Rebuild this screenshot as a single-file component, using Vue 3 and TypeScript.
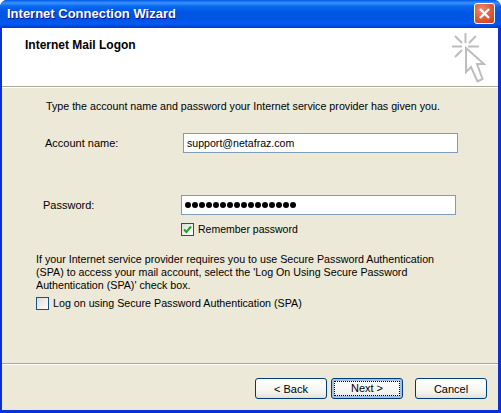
<template>
  <div class="window">
    <div class="titlebar">
      <span class="title">Internet Connection Wizard</span>
      <button class="close" type="button" aria-label="Close">
        <svg width="13" height="13" viewBox="0 0 13 13">
          <path d="M2 2 L11 11 M11 2 L2 11" stroke="#fff" stroke-width="2.4" />
        </svg>
      </button>
    </div>
    <div class="client">
      <div class="header">
        <h1 class="heading">Internet Mail Logon</h1>
        <svg class="wizard-icon" width="34" height="50" viewBox="0 0 34 50">
          <path d="M0 13.5H10M13.5 0V10M16 13.5H27M3 3L10 10M24 3L17 10M3 24L10 17" fill="none" stroke="#bdbdbd" stroke-width="2" />
          <path d="M14 15V39L19 34L25.5 48.5L30.5 46L25 31H32Z" fill="#fff" stroke="#bdbdbd" stroke-width="2" />
        </svg>
      </div>
      <div class="body">
        <p class="intro">Type the account name and password your Internet service provider has given you.</p>
        <div class="field account">
          <label class="label">Account name:</label>
          <div class="textbox">{{ account }}</div>
        </div>
        <div class="field password">
          <label class="label">Password:</label>
          <div class="textbox dots">
            <i v-for="n in passwordLength" :key="n"></i>
          </div>
        </div>
        <div class="remember">
          <span class="check on">
            <svg width="9" height="9" viewBox="0 0 9 9">
              <path d="M1 4.5L3.4 7L8 1.5" fill="none" stroke="#21a121" stroke-width="2" />
            </svg>
          </span>
          <span>Remember password</span>
        </div>
        <p class="spa-text">
          If your Internet service provider requires you to use Secure Password Authentication<br />
          (SPA) to access your mail account, select the 'Log On Using Secure Password<br />
          Authentication (SPA)' check box.
        </p>
        <div class="spa-check">
          <span class="check"></span>
          <span>Log on using Secure Password Authentication (SPA)</span>
        </div>
      </div>
      <div class="footer">
        <button class="btn" type="button">&lt; Back</button>
        <button class="btn default" type="button"><span>Next &gt;</span></button>
        <button class="btn cancel" type="button">Cancel</button>
      </div>
    </div>
  </div>
</template>

<script setup lang="ts">
const account = 'support@netafraz.com'
const passwordLength = 16
</script>

<style>
html,
body {
  margin: 0;
  background: #fff;
}
</style>

<style scoped>
.window {
  width: 501px;
  height: 413px;
  box-sizing: border-box;
  display: flex;
  flex-direction: column;
  overflow: hidden;
  background: #0831d9;
  font-family: "Liberation Sans", Arial, sans-serif;
  font-size: 10.7px;
  color: #000;
  border-radius: 7px 7px 0 0;
}

.titlebar {
  height: 28px;
  flex: none;
  display: flex;
  align-items: center;
  justify-content: space-between;
  padding: 0 6px 1px 7px;
  box-sizing: border-box;
  background: linear-gradient(180deg, #0058e6 0, #3a93ff 3px, #0a6af0 6px, #0056e2 12px, #0055e5 20px, #005bf5 24px, #003dd0 27px, #0042d8 28px);
}

.title {
  color: #fff;
  font-size: 13px;
  font-weight: 700;
  text-shadow: 1px 1px 0 #0f1089;
}

.close {
  width: 21px;
  height: 21px;
  padding: 0;
  display: flex;
  align-items: center;
  justify-content: center;
  border: 1px solid #fff;
  border-radius: 3px;
  background: radial-gradient(circle at 35% 30%, #ed8a6c, #df5a36 55%, #c63a1a);
}

.client {
  flex: 1;
  display: flex;
  flex-direction: column;
  margin: 0 3px 3px 2px;
  background: #ece9d8;
  min-height: 0;
}

.header {
  height: 59px;
  flex: none;
  box-sizing: border-box;
  display: flex;
  justify-content: space-between;
  background: #fff;
  padding: 5px 12px 0 23px;
  border-bottom: 1px solid #aca899;
  box-shadow: 0 1px 0 #fff;
}

.heading {
  margin: 5px 0 0;
  font-size: 12px;
  font-weight: 700;
  line-height: 14px;
}

.body {
  flex: 1;
  padding-left: 43px;
  min-height: 0;
}

.intro {
  margin: 12px 0 0 1px;
  line-height: 14px;
}

.field {
  display: flex;
  align-items: center;
}

.label {
  font-size: 11px;
  line-height: 14px;
}

.account {
  margin-top: 20px;
}

.account .label {
  width: 138px;
}

.password {
  margin: 42px 0 0 -2px;
}

.password .label {
  width: 138px;
}

.textbox {
  width: 275px;
  height: 20px;
  box-sizing: border-box;
  border: 1px solid #7f9db9;
  background: #fff;
  padding-left: 3px;
  font-size: 10.6px;
  line-height: 18px;
}

.dots {
  display: flex;
  align-items: center;
  gap: 1px;
  padding-left: 3px;
}

.dots i {
  width: 6px;
  height: 6px;
  border-radius: 50%;
  background: #000;
}

.remember {
  display: flex;
  align-items: center;
  gap: 4px;
  margin: 7px 0 0 136px;
  font-size: 10.5px;
  line-height: 14px;
}

.check {
  width: 13px;
  height: 13px;
  box-sizing: border-box;
  flex: none;
  display: flex;
  align-items: center;
  justify-content: center;
  border: 1px solid #1c5180;
  background: linear-gradient(135deg, #dcdcd7, #fff);
}

.spa-text {
  margin: 17px 0 0 -9px;
  line-height: 13px;
}

.spa-check {
  display: flex;
  align-items: center;
  gap: 4px;
  margin: 4px 0 0 -9px;
  line-height: 14px;
}

.footer {
  height: 47px;
  flex: none;
  box-sizing: border-box;
  display: flex;
  align-items: flex-start;
  padding: 14px 0 0 253px;
  gap: 4px;
  border-top: 1px solid #aca899;
  box-shadow: inset 0 1px 0 #fff;
}

.btn {
  width: 72px;
  height: 21px;
  box-sizing: border-box;
  padding: 0;
  border: 1px solid #003c74;
  border-radius: 3px;
  background: linear-gradient(180deg, #fff, #f3f3ee 70%, #e3e1d6);
  font: inherit;
  font-size: 11px;
  color: #000;
}

.default {
  box-shadow: inset 0 0 0 2px #a5bfe8;
}

.default span {
  display: block;
  margin: 2px;
  line-height: 13px;
  border: 1px dotted #000;
}

.cancel {
  margin-left: 8px;
}
</style>
